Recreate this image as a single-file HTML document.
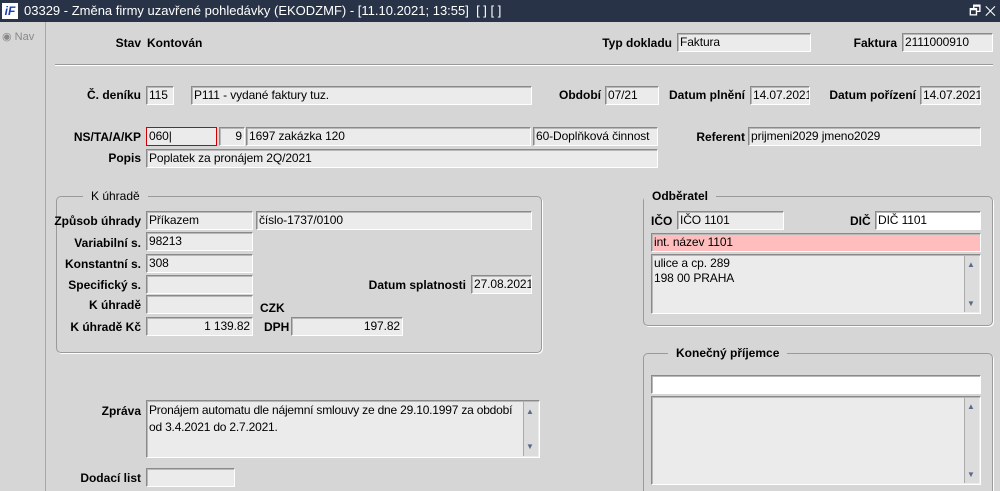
<!DOCTYPE html>
<html><head><meta charset="utf-8"><style>
*{box-sizing:border-box;margin:0;padding:0}
html,body{width:1000px;height:491px;overflow:hidden}
body{background:#d6d6d6;font-family:"Liberation Sans",Arial,sans-serif;font-size:12px;color:#000;position:relative}
.t{position:absolute;left:0;top:0;width:1000px;height:22px;background:#283347;color:#fff;font-size:13px;line-height:22px;padding-left:24px}
.logo{position:absolute;left:2px;top:3px;width:16px;height:16px;background:#fff;color:#1a3fb0;font-weight:bold;font-style:italic;font-size:12px;line-height:16px;text-align:center}
.side{position:absolute;left:0;top:22px;width:46px;height:469px;background:#d6d6d6;border-right:1px solid #a8a8a8}
.l{position:absolute;font-weight:bold;text-align:right;white-space:nowrap}
.f{position:absolute;height:19px;background:#ebebeb;border:1px solid #8a8a8a;border-right-color:#fff;border-bottom-color:#fff;box-shadow:inset 1px 1px 0 #b8b8b8;padding:1px 2px;white-space:nowrap;overflow:hidden;line-height:15px;letter-spacing:-0.1px}
.r{text-align:right}
.box{position:absolute;border:1px solid #9a9a9a;border-radius:5px;box-shadow:1px 1px 0 #fff}
.lg{position:absolute;background:#d6d6d6;padding:0 8px;top:-8px;font-size:12px}
.sb{position:absolute;right:1px;top:1px;bottom:1px;width:15px;background:#dcdcdc;border-left:1px solid #aaa}
.sb:before{content:"▲";position:absolute;top:1px;left:2px;font-size:8px;color:#5a6a88}
.sb:after{content:"▼";position:absolute;bottom:1px;left:2px;font-size:8px;color:#5a6a88}
</style></head><body>
<div class="t"><div class="logo">iF</div>03329 - Změna firmy uzavřené pohledávky (EKODZMF) - [11.10.2021; 13:55]&nbsp; [ ] [ ]<span style="position:absolute;right:4px;top:0">🗗 ✕</span></div>
<div class="side"><div style="position:absolute;left:2px;top:8px;color:#888;font-size:11px">◉ Nav</div></div>

<div class="l" style="right:859px;top:36px">Stav</div><div class="l" style="left:147px;top:36px;text-align:left">Kontován</div>
<div class="l" style="right:328px;top:36px">Typ dokladu</div><div class="f" style="left:677px;top:33px;width:134px">Faktura</div>
<div class="l" style="right:103px;top:36px">Faktura</div><div class="f" style="left:902px;top:33px;width:91px">2111000910</div>
<div style="position:absolute;left:55px;top:64px;width:938px;height:2px;border-top:1px solid #999;border-bottom:1px solid #fff"></div>

<div class="l" style="right:859px;top:88px">Č. deníku</div><div class="f" style="left:146px;top:86px;width:28px">115</div>
<div class="f" style="left:191px;top:86px;width:341px">P111 - vydané faktury tuz.</div>
<div class="l" style="right:399px;top:88px">Období</div><div class="f" style="left:605px;top:86px;width:54px">07/21</div>
<div class="l" style="right:255px;top:88px">Datum plnění</div><div class="f" style="left:750px;top:86px;width:60px">14.07.2021</div>
<div class="l" style="right:84px;top:88px">Datum pořízení</div><div class="f" style="left:920px;top:86px;width:61px">14.07.2021</div>

<div class="l" style="right:859px;top:130px">NS/TA/A/KP</div>
<div class="f" style="left:146px;top:127px;width:71px;border:1px solid #d00000;box-shadow:none">060|</div>
<div class="f r" style="left:219px;top:127px;width:26px">9</div>
<div class="f" style="left:246px;top:127px;width:285px">1697 zakázka 120</div>
<div class="f" style="left:533px;top:127px;width:125px">60-Doplňková činnost</div>
<div class="l" style="right:255px;top:130px">Referent</div><div class="f" style="left:748px;top:127px;width:233px">prijmeni2029 jmeno2029</div>
<div class="l" style="right:859px;top:151px">Popis</div><div class="f" style="left:146px;top:149px;width:512px">Poplatek za pronájem 2Q/2021</div>

<div class="box" style="left:56px;top:196px;width:486px;height:157px"><div class="lg" style="left:26px">K úhradě</div></div>
<div class="l" style="right:859px;top:214px">Způsob úhrady</div><div class="f" style="left:146px;top:211px;width:107px">Příkazem</div><div class="f" style="left:256px;top:211px;width:276px">číslo-1737/0100</div>
<div class="l" style="right:859px;top:236px">Variabilní s.</div><div class="f" style="left:146px;top:232px;width:107px">98213</div>
<div class="l" style="right:859px;top:257px">Konstantní s.</div><div class="f" style="left:146px;top:254px;width:107px">308</div>
<div class="l" style="right:859px;top:278px">Specifický s.</div><div class="f" style="left:146px;top:275px;width:107px"></div>
<div class="l" style="right:534px;top:278px">Datum splatnosti</div><div class="f" style="left:471px;top:275px;width:61px">27.08.2021</div>
<div class="l" style="right:859px;top:298px">K úhradě</div><div class="f" style="left:146px;top:295px;width:107px"></div>
<div class="l" style="left:260px;top:301px">CZK</div>
<div class="l" style="right:859px;top:320px">K úhradě Kč</div><div class="f r" style="left:146px;top:317px;width:107px">1 139.82</div>
<div class="l" style="left:264px;top:320px">DPH</div><div class="f r" style="left:291px;top:317px;width:112px">197.82</div>

<div class="box" style="left:643px;top:196px;width:350px;height:130px"><div class="lg" style="left:0px;font-weight:bold">Odběratel</div></div>
<div class="l" style="left:651px;top:214px">IČO</div><div class="f" style="left:677px;top:211px;width:107px">IČO 1101</div>
<div class="l" style="left:850px;top:214px">DIČ</div><div class="f" style="left:875px;top:211px;width:106px;background:#fff">DIČ 1101</div>
<div class="f" style="left:651px;top:233px;width:330px;background:#ffbdbd">int. název 1101</div>
<div class="f" style="left:651px;top:254px;width:330px;height:60px;line-height:15px;white-space:normal">ulice a cp. 289<br>198 00 PRAHA<div class="sb"></div></div>

<div class="box" style="left:643px;top:353px;width:350px;height:150px"><div class="lg" style="left:24px;font-weight:bold">Konečný příjemce</div></div>
<div class="f" style="left:651px;top:375px;width:330px;background:#fff"></div>
<div class="f" style="left:651px;top:396px;width:330px;height:89px"><div class="sb"></div></div>

<div class="l" style="right:859px;top:404px">Zpráva</div>
<div class="f" style="left:146px;top:400px;width:394px;height:58px;white-space:normal;line-height:17px;padding-right:12px;letter-spacing:-0.2px">Pronájem automatu dle nájemní smlouvy ze dne 29.10.1997 za období od 3.4.2021 do 2.7.2021.<div class="sb"></div></div>
<div class="l" style="right:859px;top:471px">Dodací list</div><div class="f" style="left:146px;top:468px;width:89px"></div>
</body></html>
